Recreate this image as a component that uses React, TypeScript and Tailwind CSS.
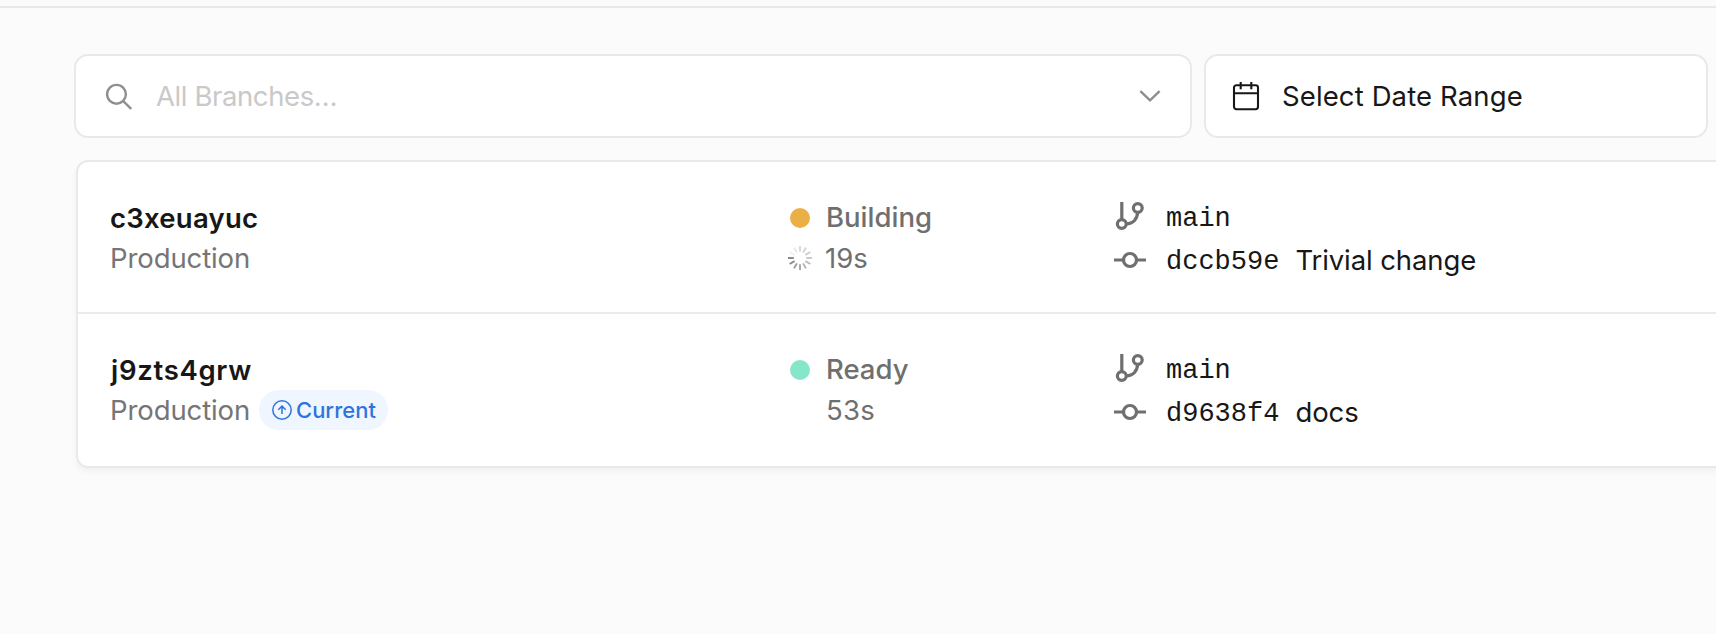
import type { ReactNode } from "react";

function SearchIcon() {
  return (
    <svg width="28" height="28" viewBox="0 0 28 28" fill="none" stroke="#8f8f8f" strokeWidth="2.4" className="shrink-0">
      <circle cx="12.5" cy="12.3" r="9.4" />
      <path d="M19 18.8 27.2 27" />
    </svg>
  );
}

function ChevronIcon() {
  return (
    <svg width="24" height="24" viewBox="0 0 24 24" fill="none" stroke="#8f8f8f" strokeWidth="2.4" className="shrink-0">
      <path d="M2.4 7.2 12 16.4 21.6 7.2" />
    </svg>
  );
}

function CalendarIcon() {
  return (
    <svg width="28" height="30" viewBox="0 0 28 30" fill="none" stroke="#171717" strokeWidth="2.1" className="shrink-0">
      <rect x="2" y="4.2" width="24" height="24" rx="2.4" />
      <path d="M2 12.3H26M8.7 1V8.2M19.3 1V8.2" />
    </svg>
  );
}

function BranchIcon() {
  return (
    <svg width="32" height="32" viewBox="0 0 32 32" fill="none" stroke="#6f6f6f" strokeWidth="3.2" className="shrink-0">
      <path d="M7.8 2V19.5M23.7 12.4C23.2 19 19 23.6 12.2 24" />
      <circle cx="7.8" cy="24" r="4.4" />
      <circle cx="23.8" cy="8" r="4.4" />
    </svg>
  );
}

function CommitIcon() {
  return (
    <svg width="32" height="32" viewBox="0 0 32 32" fill="none" stroke="#6f6f6f" strokeWidth="3.2" className="shrink-0">
      <circle cx="16" cy="16" r="6.5" />
      <path d="M0 16H9.5M22.5 16H32" />
    </svg>
  );
}

function ArrowCircleIcon() {
  return (
    <svg width="20" height="20" viewBox="0 0 20 20" fill="none" stroke="#2f74de" strokeWidth="1.5" className="shrink-0">
      <circle cx="10" cy="10" r="9.2" />
      <path d="M10 14V6.6M6.3 9.8 10 6.1 13.7 9.8" />
    </svg>
  );
}

const SPOKES = [0.3, 0.33, 0.38, 0.42, 0.5, 0.58, 0.68, 0.78, 0.88, 0.95, 0.1, 0.18];

function Spinner() {
  return (
    <svg width="24" height="24" viewBox="0 0 24 24" stroke="#7d7d7d" strokeWidth="1.9" className="shrink-0">
      {SPOKES.map((opacity, i) => (
        <path key={i} d="M12 0V5.8" opacity={opacity} transform={`rotate(${i * 30} 12 12)`} />
      ))}
    </svg>
  );
}

type Deployment = {
  name: ReactNode;
  current?: boolean;
  status: string;
  dot: string;
  time: ReactNode;
  loading?: boolean;
  hash: string;
  message: string;
};

const DEPLOYMENTS: Deployment[] = [
  {
    name: <span className="tracking-[0.25px]">c3xeuayuc</span>,
    status: "Building",
    dot: "bg-[#eab045]",
    time: <span className="-ml-[1px]">19s</span>,
    loading: true,
    hash: "dccb59e",
    message: "Trivial change",
  },
  {
    name: <span className="ml-[1px] tracking-[0.7px]">j9zts4grw</span>,
    current: true,
    status: "Ready",
    dot: "bg-[#86e6ca]",
    time: <span className="tracking-[0.3px]">53s</span>,
    hash: "d9638f4",
    message: "docs",
  },
];

function Row({ d }: { d: Deployment }) {
  return (
    <div className="flex h-[152px] border-b-2 border-[#ebebeb] pl-8 last:border-b-0">
      <div className="w-[678px] shrink-0 pt-9">
        <div className="h-10 font-semibold">{d.name}</div>
        <div className="flex h-10 items-center text-[#757575]">
          <span className="w-[149px] tracking-[-0.1px]">Production</span>
          {d.current && (
            <span className="flex h-10 w-[129px] items-center gap-1 rounded-full bg-[#eff6ff] pl-[13px] text-[22px] font-medium text-[#2f74de]">
              <ArrowCircleIcon />
              <span>Current</span>
            </span>
          )}
        </div>
      </div>
      <div className="w-[326px] shrink-0 pt-9 text-[#6f6f6f]">
        <div className="flex h-10 items-center gap-[14px]">
          <span className="flex w-6 justify-center">
            <span className={`size-5 rounded-full ${d.dot}`} />
          </span>
          <span className="-mt-[2px] font-medium">{d.status}</span>
        </div>
        <div className="flex h-10 items-center gap-[14px]">
          <span className="w-6">{d.loading && <Spinner />}</span>
          {d.time}
        </div>
      </div>
      <div className="shrink-0 pt-8">
        <div className="flex h-11 items-center gap-5">
          <BranchIcon />
          <span className="pt-[5px] font-['Liberation_Mono',monospace] text-[27px]">main</span>
        </div>
        <div className="flex h-11 items-center gap-5">
          <CommitIcon />
          <span className="pt-[3px] font-['Liberation_Mono',monospace] text-[27px]">{d.hash}</span>
          <span className="-ml-1 tracking-[-0.1px]">{d.message}</span>
        </div>
      </div>
    </div>
  );
}

export default function App() {
  return (
    <div className="h-[634px] w-full overflow-hidden bg-[#fbfbfb] pt-[6px] font-['Inter',sans-serif] text-[27.5px] leading-10 text-[#171717]">
      <div className="h-[2px] bg-[#e9e9e9]" />
      <div className="mt-[46px] flex gap-3 pl-[74px]">
        <div className="flex h-[84px] w-[1118px] shrink-0 items-center rounded-[14px] border-2 border-[#e9e9e9] bg-white pl-7 pr-[28px]">
          <SearchIcon />
          <span className="ml-[24px] flex-1 tracking-[-0.4px] text-[#c9c9c9]">All Branches…</span>
          <ChevronIcon />
        </div>
        <div className="flex h-[84px] w-[504px] shrink-0 items-center rounded-[14px] border-2 border-[#e9e9e9] bg-white pl-[26px]">
          <CalendarIcon />
          <span className="ml-[22px] tracking-[0.12px]">Select Date Range</span>
        </div>
      </div>
      <div className="ml-[76px] mt-[22px] h-[308px] w-[1680px] rounded-[12px] border-2 border-[#e9e9e9] bg-white shadow-[0_4px_6px_rgba(0,0,0,0.04)]">
        {DEPLOYMENTS.map((d) => (
          <Row key={d.hash} d={d} />
        ))}
      </div>
    </div>
  );
}
